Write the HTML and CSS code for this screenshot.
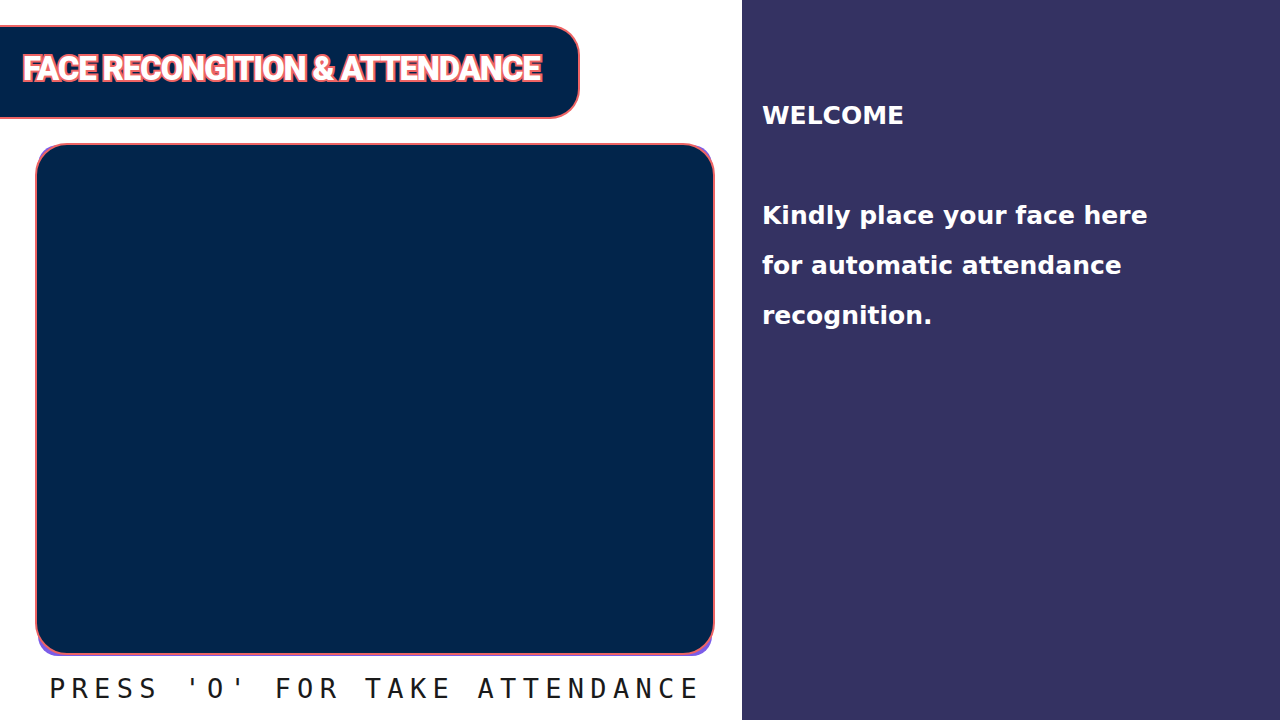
FILE: index.html
```html
<!DOCTYPE html>
<html>
<head>
<meta charset="utf-8">
<link rel="stylesheet" href="styles.css">
</head>
<body>
<div class="page">
  <main class="left">
    <header class="title-bar">
      <h1 class="title">FACE RECONGITION &amp; ATTENDANCE</h1>
    </header>
    <div class="camera-wrap">
      <div class="camera"></div>
    </div>
    <p class="hint">PRESS 'O' FOR TAKE ATTENDANCE</p>
  </main>
  <aside class="right">
    <h2 class="welcome">WELCOME</h2>
    <p class="message">Kindly place your face here for automatic attendance recognition.</p>
  </aside>
</div>
</body>
</html>
```
FILE: styles.css
```css
html, body {
  margin: 0;
  padding: 0;
  width: 1280px;
  height: 720px;
  overflow: hidden;
  background: #ffffff;
}
.page {
  display: flex;
  width: 1280px;
  height: 720px;
}
.left {
  width: 742px;
  display: flex;
  flex-direction: column;
  padding-top: 25px;
  box-sizing: border-box;
}
.title-bar {
  width: 580px;
  height: 94px;
  box-sizing: border-box;
  background: #01244b;
  border: 2px solid #ee6464;
  border-left: none;
  border-radius: 0 30px 30px 0;
  display: flex;
  align-items: center;
  padding-left: 23px;
}
.title {
  margin: 0 0 8px 0;
  font-family: "Roboto", "Liberation Sans", sans-serif;
  font-weight: 900;
  font-size: 33px;
  letter-spacing: -1.2px;
  color: #ffffff;
  -webkit-text-stroke: 4px #ee6464;
  paint-order: stroke fill;
  white-space: nowrap;
}
.camera-wrap {
  margin: 24px 0 0 35px;
  width: 680px;
  height: 512px;
  position: relative;
}
.camera-wrap::before {
  content: "";
  position: absolute;
  left: 3px;
  right: 3px;
  top: 2px;
  bottom: -1px;
  border-radius: 20px;
  background: #7b5ce8;
}
.camera {
  position: relative;
  width: 100%;
  height: 100%;
  box-sizing: border-box;
  background: #02254b;
  border: 2px solid #ee6464;
  border-radius: 32px;
}
.hint {
  margin: 18px 0 0 49px;
  font-family: "DejaVu Sans Mono", "Liberation Mono", monospace;
  font-weight: 400;
  font-size: 27px;
  letter-spacing: 6.3px;
  color: #1a1a1a;
  line-height: 32px;
  white-space: nowrap;
}
.right {
  flex: 1;
  background: #343262;
  padding: 99px 0 0 20px;
  box-sizing: border-box;
  color: #ffffff;
  font-family: "DejaVu Sans", sans-serif;
  font-weight: 700;
}
.welcome {
  margin: 0;
  font-size: 25px;
  line-height: 34px;
  font-weight: 700;
}
.message {
  margin: 58px 0 0 0;
  width: 420px;
  font-size: 25px;
  line-height: 50px;
}
```
